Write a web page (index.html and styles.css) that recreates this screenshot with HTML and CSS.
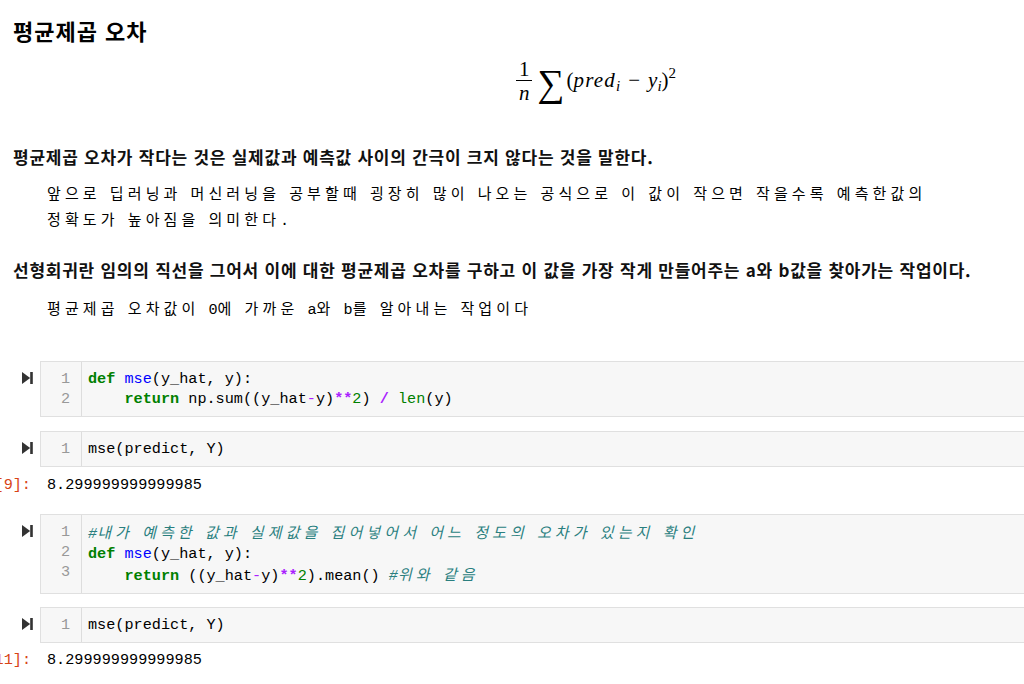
FILE: index.html
```html
<!DOCTYPE html>
<html lang="ko">
<head>
<meta charset="utf-8">
<title>평균제곱 오차</title>
<link rel="stylesheet" href="styles.css">
</head>
<body>
<div class="nb">
  <div class="md">
    <h1 class="title">평균제곱 오차</h1>
    <div class="formula">
      <span class="frac"><span class="fnum">1</span><span class="fden">n</span></span>
      <span class="sigma">∑</span>
      <span class="expr">(<i class="pred">pred</i><sub>i</sub><span class="minus">−</span><i>y</i><sub>i</sub>)<sup>2</sup></span>
    </div>
    <p class="strong">평균제곱 오차가 작다는 것은 실제값과 예측값 사이의 간극이 크지 않다는 것을 말한다.</p>
    <div class="mdpre first">
      <div class="pl"><span class="k">앞으로</span> <span class="k">딥러닝과</span> <span class="k">머신러닝을</span> <span class="k">공부할때</span> <span class="k">굉장히</span> <span class="k">많이</span> <span class="k">나오는</span> <span class="k">공식으로</span> <span class="k">이</span> <span class="k">값이</span> <span class="k">작으면</span> <span class="k">작을수록</span> <span class="k">예측한값의</span></div>
      <div class="pl"><span class="k">정확도가</span> <span class="k">높아짐을</span> <span class="k">의미한다</span>.</div>
    </div>
    <p class="strong second">선형회귀란 임의의 직선을 그어서 이에 대한 평균제곱 오차를 구하고 이 값을 가장 작게 만들어주는 a와 b값을 찾아가는 작업이다.</p>
    <div class="mdpre third">
      <div class="pl"><span class="k">평균제곱</span> <span class="k">오차값이</span> 0<span class="k">에</span> <span class="k">가까운</span> a<span class="k">와</span> b<span class="k">를</span> <span class="k">알아내는</span> <span class="k">작업이다</span></div>
    </div>
  </div>

  <div class="cell c1">
    <div class="prompt"><svg class="run" width="11" height="12" viewBox="0 0 11 12"><path d="M0 0 L8.2 6 L0 12 Z"/><rect x="8.2" y="0" width="2.6" height="12"/></svg></div>
    <div class="input">
      <div class="gutter"><div>1</div><div>2</div></div>
      <div class="code">
        <div class="ln"><span class="kw">def</span> <span class="fn">mse</span>(y_hat, y):</div>
        <div class="ln">    <span class="kw">return</span> np.sum((y_hat<span class="op">-</span>y)<span class="opb">**</span><span class="num">2</span>) <span class="opb">/</span> <span class="bi">len</span>(y)</div>
      </div>
    </div>
  </div>

  <div class="cell c2">
    <div class="prompt"><svg class="run" width="11" height="12" viewBox="0 0 11 12"><path d="M0 0 L8.2 6 L0 12 Z"/><rect x="8.2" y="0" width="2.6" height="12"/></svg></div>
    <div class="input">
      <div class="gutter"><div>1</div></div>
      <div class="code">
        <div class="ln">mse(predict, Y)</div>
      </div>
    </div>
  </div>
  <div class="out o1">
    <div class="oprompt">[9]:</div>
    <div class="otext">8.299999999999985</div>
  </div>

  <div class="cell c3">
    <div class="prompt"><svg class="run" width="11" height="12" viewBox="0 0 11 12"><path d="M0 0 L8.2 6 L0 12 Z"/><rect x="8.2" y="0" width="2.6" height="12"/></svg></div>
    <div class="input">
      <div class="gutter"><div>1</div><div>2</div><div>3</div></div>
      <div class="code">
        <div class="ln"><span class="cm">#<span class="k">내가</span> <span class="k">예측한</span> <span class="k">값과</span> <span class="k">실제값을</span> <span class="k">집어넣어서</span> <span class="k">어느</span> <span class="k">정도의</span> <span class="k">오차가</span> <span class="k">있는지</span> <span class="k">확인</span></span></div>
        <div class="ln"><span class="kw">def</span> <span class="fn">mse</span>(y_hat, y):</div>
        <div class="ln">    <span class="kw">return</span> ((y_hat<span class="op">-</span>y)<span class="opb">**</span><span class="num">2</span>).mean() <span class="cm">#<span class="k">위와</span> <span class="k">같음</span></span></div>
      </div>
    </div>
  </div>

  <div class="cell c4">
    <div class="prompt"><svg class="run" width="11" height="12" viewBox="0 0 11 12"><path d="M0 0 L8.2 6 L0 12 Z"/><rect x="8.2" y="0" width="2.6" height="12"/></svg></div>
    <div class="input">
      <div class="gutter"><div>1</div></div>
      <div class="code">
        <div class="ln">mse(predict, Y)</div>
      </div>
    </div>
  </div>
  <div class="out o2">
    <div class="oprompt">[11]:</div>
    <div class="otext">8.299999999999985</div>
  </div>
</div>
</body>
</html>
```

FILE: styles.css
```css
* {
  box-sizing: border-box;
}

html, body {
  margin: 0;
  padding: 0;
  background: #ffffff;
}

body {
  width: 1024px;
  height: 684px;
  overflow: hidden;
  font-family: "Noto Sans CJK KR", "Noto Sans", sans-serif;
  color: #111111;
}

.nb {
  width: 1200px;
}

.md {
  padding-left: 13px;
}

.title {
  margin: 15px 0 0;
  font-size: 22px;
  line-height: 30px;
  letter-spacing: 1px;
  font-weight: 700;
  color: #000;
}

.formula {
  width: 1166px;
  height: 60px;
  margin-top: 5px;
  display: flex;
  justify-content: center;
  align-items: center;
  font-family: "Liberation Serif", "DejaVu Serif", serif;
  font-size: 21px;
  color: #000;
}

.frac {
  display: flex;
  flex-direction: column;
  align-items: center;
  margin-right: 5px;
  margin-top: 2px;
}

.fnum {
  line-height: 18px;
  padding: 0 3px 2px;
  border-bottom: 1px solid #000;
}

.fden {
  line-height: 18px;
  padding-top: 3px;
  font-style: italic;
}

.sigma {
  font-size: 38px;
  line-height: 38px;
  margin-top: 6px;
  margin-right: 2px;
}

.expr {
  line-height: 24px;
  margin-top: 0;
}

.expr i {
  font-style: italic;
}

.pred {
  letter-spacing: 1.2px;
}

.expr sub {
  font-size: 15px;
  vertical-align: -4px;
  line-height: 0;
  font-style: italic;
}

.expr sup {
  font-size: 15px;
  vertical-align: 9px;
  line-height: 0;
}

.minus {
  padding: 0 8px;
}

.strong {
  margin: 35px 0 0;
  font-size: 17px;
  line-height: 24px;
  letter-spacing: 0.75px;
  font-weight: 700;
  color: #111;
}

.strong.second {
  margin-top: 25px;
}

.mdpre {
  padding-left: 34px;
  font-family: "Liberation Mono", "DejaVu Sans Mono", monospace;
  font-size: 15.2px;
  line-height: 23px;
  color: #000;
}

.mdpre.first {
  margin-top: 12px;
}

.mdpre.third {
  margin-top: 14px;
}

.pl,
.ln {
  white-space: pre;
}

.k {
  font-family: "Noto Sans CJK KR", sans-serif;
  font-size: 15px;
  letter-spacing: 4.1px;
}

.cell {
  display: flex;
}

.c1 { margin-top: 39px; }
.c2 { margin-top: 14px; }
.c3 { margin-top: 19px; }
.c4 { margin-top: 13px; }

.prompt {
  width: 40px;
  flex: none;
  display: flex;
  justify-content: flex-end;
  align-items: flex-start;
  padding-right: 7px;
  padding-top: 11px;
}

.run {
  display: block;
  fill: #333333;
}

.input {
  flex: none;
  width: 1100px;
  display: flex;
  background: #f7f7f7;
  border: 1px solid #e0e0e0;
  font-family: "Liberation Mono", "DejaVu Sans Mono", monospace;
  font-size: 15.2px;
  line-height: 20px;
  color: #000;
}

.gutter {
  width: 41px;
  flex: none;
  padding: 7px 11px 7px 0;
  border-right: 1px solid #dddddd;
  text-align: right;
  color: #999999;
}

.code {
  padding: 7px 6px;
}

.kw { color: #008000; font-weight: 700; }
.fn { color: #0000ff; }
.op { color: #aa22ff; }
.opb { color: #aa22ff; font-weight: 700; }
.num { color: #008000; }
.bi { color: #008000; }
.cm { color: #2a7f7f; font-style: italic; }

.out {
  display: flex;
  font-family: "Liberation Mono", "DejaVu Sans Mono", monospace;
  font-size: 15.2px;
  line-height: 20px;
}

.o1 { margin-top: 8px; }
.o2 { margin-top: 7px; }

.oprompt {
  width: 40px;
  flex: none;
  display: flex;
  justify-content: flex-end;
  padding-right: 9px;
  color: #d84315;
  white-space: nowrap;
}

.otext {
  padding-left: 7px;
  color: #000;
}
```
